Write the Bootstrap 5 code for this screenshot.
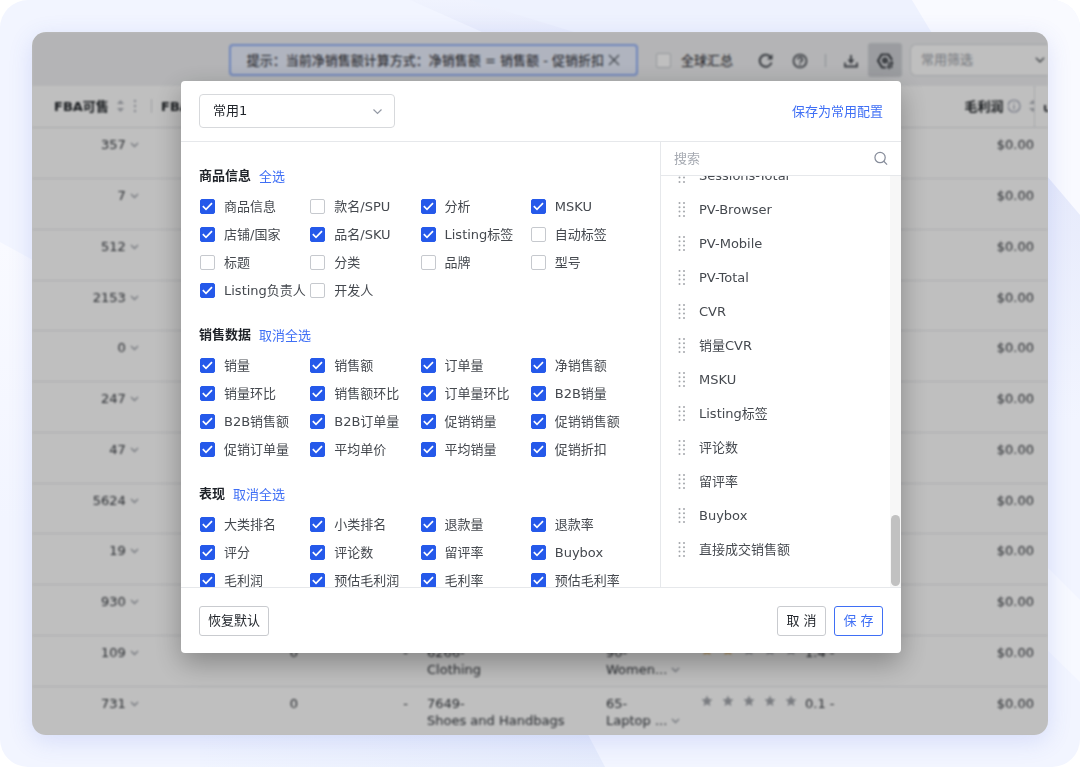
<!DOCTYPE html>
<html lang="zh-CN">
<head>
<meta charset="utf-8">
<meta name="viewport" content="width=device-width, initial-scale=1">
<title>自定义列配置</title>
<link href="https://cdn.jsdelivr.net/npm/bootstrap@5.3.0/dist/css/bootstrap.min.css" rel="stylesheet">
<style>
  :root { --brand: #2559ea; --brand-link: #3f6ff5; --ink: #1f2329; --line: #e6e8eb; }
  body { font-family: "DejaVu Sans", "Noto Sans CJK SC", sans-serif; font-size: 13px; line-height: 17px; color: var(--ink); background: #fff; }
  .stage { min-height: 100vh; padding: 32px; border-radius: 28px; overflow: hidden; isolation: isolate; background: #f2f5ff; }
  .backdrop-art { inset: 0; z-index: -1; }
  .board { border-radius: 14px; background: #fff; height: calc(100vh - 64px); min-height: 660px; box-shadow: 0 6px 24px rgba(70, 95, 220, .16); }
  .board-content { filter: blur(1px); }
  .shade { inset: 0; background: rgba(0, 0, 0, .25); padding: 49px 147px 0 149px; }

  .topbar { height: 54px; padding-top: 2px; background: #f0f1f3; }
  .tip { height: 32px; background: #ebf1ff; border: 2px solid #95b3fb; border-radius: 4px; padding: 0 16px; margin-right: 18px; }
  .global-toggle { gap: 10px; }
  .tool { width: 34px; height: 34px; padding: 0; border: 0; border-radius: 3px; color: #4b4f56; }
  .tool.active { background: #cfd1d6; }
  .bar-split { width: 1px; height: 13px; background: #b9bcc2; }
  .filter-select { width: 138px; height: 32px; font-size: 13px; line-height: 18px; padding: 6px 10px; color: #9a9ea6; border-color: #d9dbdf; background-position: right 3px center; background-size: 10px; }
  .box { width: 15px; height: 15px; margin: 0; border: 1px solid #c6c9ce; flex: none; }
  .form-check-input.box[type=checkbox] { border-radius: 2px; }
  .box:checked { background-color: var(--brand); border-color: var(--brand); }
  .form-check-input.box:checked[type=checkbox] { background-image: url("data:image/svg+xml,%3csvg xmlns='http://www.w3.org/2000/svg' viewBox='0 0 15 15'%3e%3cpath fill='none' stroke='%23fff' stroke-width='1.7' d='M2.8 7.2l3.2 3.1 6-6.2'/%3e%3c/svg%3e"); background-size: 15px; }

  .sheet { table-layout: fixed; --bs-table-bg: transparent; }
  .sheet th { height: 41px; padding: 0 9px; vertical-align: middle; white-space: nowrap; overflow: hidden; border-color: #dfe1e4; }
  .sheet td { height: 51px; padding: 8px 9px 0; color: #33373d; white-space: nowrap; border-color: #e4e6e9; }
  .sheet tr:nth-child(4n) td { height: 50px; }
  .sheet .stock { padding-right: 13px; }
  .sheet .stock-head { padding: 0 0 0 22px; }
  .sheet .money, .sheet .next-head { padding-right: 0; }
  .sheet .cat { padding-left: 10px; }
  .sheet .rate { padding-left: 6px; }
  .stars { gap: 9px; }
  .c-stock { width: 120px; } .c-a { width: 155px; } .c-b { width: 110px; } .c-cat { width: 180px; } .c-sub { width: 98px; } .c-rate { width: 170px; } .c-end { width: 14px; }
  .th-split { border-right: 1px solid #d3d5d9; }
  .head-split { width: 1px; height: 14px; background: #d3d5d9; }

  .dialog { background: #fff; border-radius: 4px; height: 572px; box-shadow: 0 10px 28px rgba(0, 0, 0, .3); }
  .dialog-head { height: 61px; padding: 0 18px; border-bottom: 1px solid var(--line); }
  .dialog-foot { height: 66px; padding: 0 18px; border-top: 1px solid var(--line); }
  .preset { width: 196px; height: 34px; font-size: 13px; line-height: 18px; padding: 7px 13px; border-color: #d7d9dc; border-radius: 4px; color: var(--ink); background-position: right 11px center; background-size: 11px; --bs-form-select-bg-img: url("data:image/svg+xml,%3csvg xmlns='http://www.w3.org/2000/svg' viewBox='0 0 11 11'%3e%3cpath fill='none' stroke='%23949aa5' stroke-width='1.2' d='M1.5 3.5l4 4 4-4'/%3e%3c/svg%3e"); background-image: var(--bs-form-select-bg-img); }
  .dialog a { color: var(--brand-link); }
  .groups { padding: 23px 20px 0 18px; }
  .group { margin-bottom: 20px; }
  .group-title { font-size: 13px; line-height: 22px; font-weight: 700; margin: 0; }
  .group-head { margin-bottom: 5px; }
  .opt { height: 28px; gap: 9px; color: #45494f; white-space: nowrap; padding-left: 1px; }
  .side { width: 241px; border-left: 1px solid var(--line); }
  .search { height: 34px; padding: 0 13px; border-bottom: 1px solid var(--line); }
  .search input { font-size: 13px; line-height: 18px; }
  .search input::placeholder { color: #a6aab2; opacity: 1; }
  .picked { padding: 0 0 21px 17px; }
  .picked li { height: 34px; gap: 13px; flex: none; color: #45494f; }
  .track { width: 11px; background: #f7f7f7; padding: 1px; }
  .thumb { height: 71px; border-radius: 5px; background: #c1c1c1; }
  .act { font-size: 13px; line-height: 18px; min-width: 49px; height: 30px; padding: 0 8px; border: 1px solid #c9cbcf; border-radius: 3px; color: var(--ink); background: #fff; }
  .act-save { border-color: var(--brand-link); color: var(--brand-link); }
</style>
</head>
<body>
<div class="stage position-relative">
  <svg class="backdrop-art position-absolute w-100 h-100" viewBox="0 0 1080 767" preserveAspectRatio="none" aria-hidden="true">
    <defs>
      <linearGradient id="fadeDown" x1="0" y1="0" x2="0" y2="1"><stop offset="0" stop-color="#f0f3fe"/><stop offset="1" stop-color="#e7ebfb"/></linearGradient>
      <linearGradient id="fadeSide" x1="0" y1="0" x2="0" y2="1"><stop offset="0" stop-color="#e6eafb"/><stop offset="1" stop-color="#f2f5ff"/></linearGradient>
      <linearGradient id="fadePale" x1="0" y1="0" x2="0" y2="1"><stop offset="0" stop-color="#f9faff"/><stop offset="1" stop-color="#f2f5ff"/></linearGradient>
      <linearGradient id="fadeBase" x1="0" y1="0" x2="1" y2="0"><stop offset="0" stop-color="#f0f4ff"/><stop offset="1" stop-color="#e6ecfc"/></linearGradient>
    </defs>
    <path fill="url(#fadeDown)" d="M410 0H600V40H500z"/>
    <path fill="#eef2fe" d="M470 0H912L940 40H600z"/>
    <path fill="#f9faff" d="M912 0H1080V215L1040 168 930 30z"/>
    <path fill="url(#fadeSide)" d="M1040 168L1080 215V420H1040z"/>
    <path fill="url(#fadePale)" d="M0 242L40 264V520H0z"/>
    <path fill="url(#fadeBase)" d="M200 767V700H570L605 767z"/>
    <path fill="#f7f9ff" d="M1040 643L1080 682V600L1040 560z"/>
  </svg>

  <main class="board position-relative overflow-hidden">
    <div class="board-content">
      <div class="topbar d-flex align-items-center justify-content-end">
        <div class="tip d-flex align-items-center gap-1 text-nowrap">
          <span>提示：当前净销售额计算方式：净销售额 = 销售额 - 促销折扣</span>
          <svg width="12" height="12" viewBox="0 0 12 12" fill="none" stroke="#5a5f68" stroke-width="1.3"><path d="M1 1l10 10M11 1L1 11"/></svg>
        </div>
        <div class="global-toggle d-flex align-items-center text-nowrap me-3">
          <input class="form-check-input box" type="checkbox" id="global">
          <label for="global">全球汇总</label>
        </div>
        <button class="btn tool" aria-label="刷新"><svg width="16" height="16" viewBox="0 0 16 16" fill="none" stroke="currentColor" stroke-width="2"><path d="M13.5 9.5A6 6 0 1 1 12.6 4.2"/><path d="M14.5 1v5.5H9z" fill="currentColor" stroke="none"/></svg></button>
        <button class="btn tool" aria-label="帮助"><svg width="16" height="16" viewBox="0 0 16 16" fill="none" stroke="currentColor" stroke-width="1.7"><circle cx="8" cy="8" r="6.5"/><path d="M5.8 6.4a2.2 2.2 0 1 1 3.2 2c-.8.4-1 .7-1 1.4M8 11v1.4"/></svg></button>
        <span class="bar-split mx-2"></span>
        <button class="btn tool" aria-label="下载"><svg width="16" height="16" viewBox="0 0 16 16" fill="none" stroke="currentColor" stroke-width="1.8"><path d="M8 2v7M2 9.500v4h12v-4"/><path d="M4.500 6.500h7L8 11z" fill="currentColor" stroke="none"/></svg></button>
        <button class="btn tool active" aria-label="自定义列"><svg width="18" height="18" viewBox="0 0 18 18" fill="none" stroke="currentColor" stroke-width="1.700"><path d="M10 15.500H6L2 8.700 5.500 2.500h7L16 8"/><circle cx="9" cy="8.500" r="1.800"/><path d="M13 10v6l-1.500-1.500M15.500 16v-6l1.500 1.500" stroke-width="1.300"/></svg></button>
        <select class="form-select filter-select ms-2 rounded-end-0 border-end-0" aria-label="常用筛选"><option>常用筛选</option></select>
      </div>
      <table class="table sheet mb-0">
        <colgroup><col class="c-stock"><col class="c-a"><col class="c-b"><col class="c-cat"><col class="c-sub"><col class="c-rate"><col><col class="c-end"></colgroup>
        <thead>
          <tr>
            <th class="stock-head"><span class="d-flex align-items-center gap-2">FBA可售
              <svg width="24" height="14" viewBox="0 0 24 14" fill="#b0b3ba"><path d="M3.500 1L7 5H0zM3.500 13L7 9H0z"/><circle cx="18" cy="2" r="1.200"/><circle cx="18" cy="7" r="1.200"/><circle cx="18" cy="12" r="1.200"/></svg>
              <span class="head-split ms-auto"></span></span></th>
            <th>FBA在途</th><th></th><th></th><th></th><th></th>
            <th class="money th-split"><span class="d-flex align-items-center justify-content-end gap-1">毛利润
              <svg width="26" height="14" viewBox="0 0 26 14"><g fill="none" stroke="#9a9fb2" stroke-width="1.200"><circle cx="5" cy="7" r="6" transform="translate(1 0)"/><path d="M6 3.500v1.300M6 6v4.500"/></g><path fill="#b0b3ba" d="M25 1L28 5h-7zM25 13L28 9h-7z"/></svg></span></th>
            <th class="next-head"><svg width="6" height="10" viewBox="0 0 6 10" fill="none" stroke="#33373d" stroke-width="2"><path d="M1 3v4q0 2 2 2h3"/></svg></th>
          </tr>
        </thead>
        <tbody id="rows"></tbody>
      </table>
    </div>

    <div class="shade position-absolute">
      <section class="dialog d-flex flex-column w-100 overflow-hidden" role="dialog" aria-label="自定义列">
        <header class="dialog-head d-flex align-items-center justify-content-between flex-shrink-0">
          <select class="form-select preset" aria-label="常用配置"><option>常用1</option></select>
          <a href="#" class="text-decoration-none">保存为常用配置</a>
        </header>
        <div class="d-flex flex-grow-1 overflow-hidden">
          <div class="groups flex-grow-1 overflow-hidden" id="groups"></div>
          <aside class="side d-flex flex-column flex-shrink-0">
            <div class="search d-flex align-items-center flex-shrink-0">
              <input class="form-control border-0 shadow-none p-0" type="text" placeholder="搜索" aria-label="搜索">
              <svg width="15" height="15" viewBox="0 0 15 15" fill="none" stroke="#868c9a" stroke-width="1.300"><circle cx="6.500" cy="6.500" r="5.500"/><path d="M10.500 10.500l3.500 3.500"/></svg>
            </div>
            <div class="d-flex flex-grow-1 overflow-hidden">
              <ul class="picked list-unstyled d-flex flex-column justify-content-end flex-grow-1 mb-0" id="picked"></ul>
              <div class="track d-flex flex-column justify-content-end"><div class="thumb"></div></div>
            </div>
          </aside>
        </div>
        <footer class="dialog-foot d-flex align-items-center gap-2 flex-shrink-0">
          <button class="btn act me-auto">恢复默认</button>
          <button class="btn act">取 消</button>
          <button class="btn act act-save">保 存</button>
        </footer>
      </section>
    </div>
  </main>
</div>

<script src="https://cdn.jsdelivr.net/npm/bootstrap@5.3.0/dist/js/bootstrap.bundle.min.js"></script>
<script>
  const groups = [
    { title: '商品信息', action: '全选', off: ['款名/SPU', '自动标签', '标题', '分类', '品牌', '型号', '开发人'],
      items: ['商品信息', '款名/SPU', '分析', 'MSKU', '店铺/国家', '品名/SKU', 'Listing标签', '自动标签', '标题', '分类', '品牌', '型号', 'Listing负责人', '开发人'] },
    { title: '销售数据', action: '取消全选', off: [],
      items: ['销量', '销售额', '订单量', '净销售额', '销量环比', '销售额环比', '订单量环比', 'B2B销量', 'B2B销售额', 'B2B订单量', '促销销量', '促销销售额', '促销订单量', '平均单价', '平均销量', '促销折扣'] },
    { title: '表现', action: '取消全选', off: [],
      items: ['大类排名', '小类排名', '退款量', '退款率', '评分', '评论数', '留评率', 'Buybox', '毛利润', '预估毛利润', '毛利率', '预估毛利率'] }
  ];
  document.getElementById('groups').innerHTML = groups.map((g, gi) => `
    <div class="group">
      <div class="group-head d-flex align-items-center gap-2">
        <h2 class="group-title">${g.title}</h2><a href="#" class="text-decoration-none">${g.action}</a>
      </div>
      <div class="row row-cols-4 g-0">${g.items.map((t, i) => `
        <div class="col"><div class="opt d-flex align-items-center">
          <input class="form-check-input box" type="checkbox" id="f${gi}-${i}" ${g.off.includes(t) ? '' : 'checked'}>
          <label for="f${gi}-${i}">${t}</label>
        </div></div>`).join('')}
      </div>
    </div>`).join('');

  const dots = [0, 1, 2, 3].map(r => `<circle cx="1.5" cy="${2 + r * 4.3}" r="1"/><circle cx="6" cy="${2 + r * 4.3}" r="1"/>`).join('');
  const picked = ['Sessions-Total', 'PV-Browser', 'PV-Mobile', 'PV-Total', 'CVR', '销量CVR', 'MSKU', 'Listing标签', '评论数', '留评率', 'Buybox', '直接成交销售额'];
  document.getElementById('picked').innerHTML = picked.map(t =>
    `<li class="d-flex align-items-center"><svg width="8" height="17" viewBox="0 0 8 17" fill="#a3a6ab">${dots}</svg>${t}</li>`).join('');

  const chevron = '<svg width="9" height="6" viewBox="0 0 9 6" fill="none" stroke="#9ea2aa" stroke-width="1.4"><path d="M1 1l3.500 3.500L8 1"/></svg>';
  const star = on => `<svg width="12" height="12" viewBox="0 0 12 12" fill="${on ? '#e0b060' : '#a3a6ac'}"><path d="M6 .5l1.600 3.500 3.900.4-2.900 2.600.8 3.900L6 9l-3.400 1.900.8-3.900L.5 4.400l3.900-.4z"/></svg>`;
  const rows = [
    { stock: 357 }, { stock: 7 }, { stock: 512 }, { stock: 2153 }, { stock: 0 }, { stock: 247 }, { stock: 47 }, { stock: 5624 }, { stock: 19 }, { stock: 930 },
    { stock: 109, rank: ['6266-', 'Clothing'], sub: ['90-', 'Women...'], stars: 2, score: '1.4' },
    { stock: 731, rank: ['7649-', 'Shoes and Handbags'], sub: ['65-', 'Laptop ...'], stars: 0, score: '0.1' }
  ];
  document.getElementById('rows').innerHTML = rows.map(r => `
    <tr>
      <td class="stock text-end">${r.stock} ${chevron}</td>
      ${r.rank ? `<td class="text-end">0</td><td class="text-end">-</td>
        <td class="cat">${r.rank.join('<br>')}</td>
        <td>${r.sub.join('<br>')} ${chevron}</td>
        <td class="rate"><span class="d-flex gap-2"><span class="stars d-flex">${[0, 1, 2, 3, 4].map(i => star(i < r.stars)).join('')}</span>${r.score} -</span></td>`
      : '<td></td><td></td><td></td><td></td><td></td>'}
      <td class="money text-end">$0.00</td><td></td>
    </tr>`).join('');
</script>
</body>
</html>
